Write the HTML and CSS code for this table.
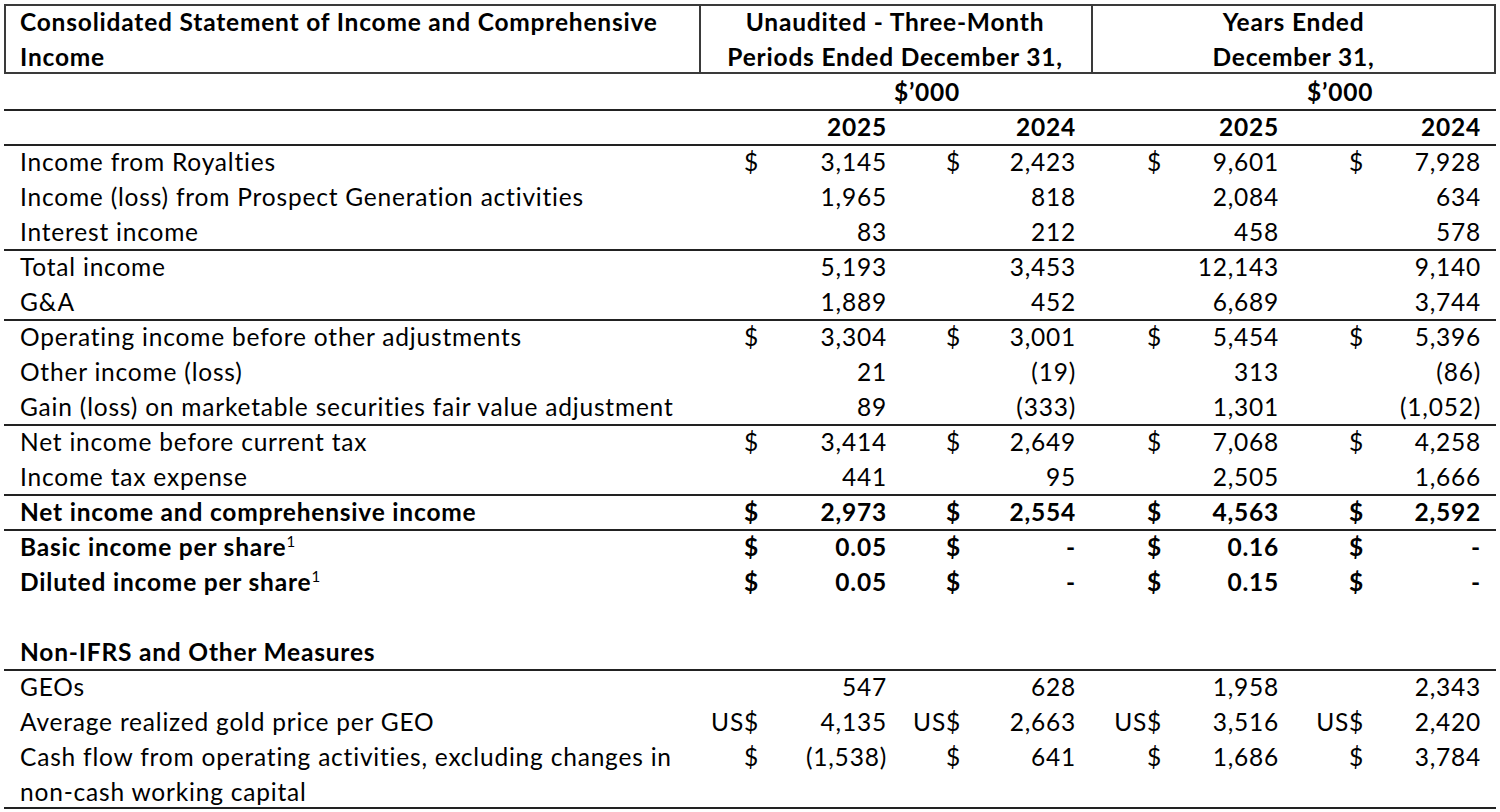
FILE: index.html
```html
<!DOCTYPE html>
<html lang="en">
<head>
<meta charset="utf-8">
<title>Consolidated Statement of Income and Comprehensive Income</title>
<link rel="stylesheet" href="styles.css">
</head>
<body>
<table class="fs">
  <colgroup>
    <col class="c-label"><col class="c-s1"><col class="c-v1"><col class="c-s2"><col class="c-v2">
    <col class="c-s3"><col class="c-v3"><col class="c-s4"><col class="c-v4">
  </colgroup>
  <thead>
    <tr class="head">
      <th class="label box-l">Consolidated Statement of Income and Comprehensive<br>Income</th>
      <th colspan="4" class="period box-m">Unaudited - Three-Month<br>Periods Ended December 31,</th>
      <th colspan="4" class="period box-r">Years Ended<br>December 31,</th>
    </tr>
    <tr class="unit">
      <th></th><th></th><th colspan="3" class="unit-a">$’000</th><th></th><th colspan="3" class="unit-b">$’000</th>
    </tr>
    <tr class="years rule">
      <th></th><th></th><th class="v1">2025</th><th></th><th class="v2">2024</th><th></th><th class="v1">2025</th><th></th><th class="v2">2024</th>
    </tr>
  </thead>
  <tbody>
    <tr class="rule">
      <td class="label">Income from Royalties</td>
      <td class="sym">$</td><td class="v1">3,145</td><td class="sym">$</td><td class="v2">2,423</td>
      <td class="sym">$</td><td class="v1">9,601</td><td class="sym">$</td><td class="v2">7,928</td>
    </tr>
    <tr>
      <td class="label">Income (loss) from Prospect Generation activities</td>
      <td class="sym"></td><td class="v1">1,965</td><td class="sym"></td><td class="v2">818</td>
      <td class="sym"></td><td class="v1">2,084</td><td class="sym"></td><td class="v2">634</td>
    </tr>
    <tr>
      <td class="label">Interest income</td>
      <td class="sym"></td><td class="v1">83</td><td class="sym"></td><td class="v2">212</td>
      <td class="sym"></td><td class="v1">458</td><td class="sym"></td><td class="v2">578</td>
    </tr>
    <tr class="rule">
      <td class="label">Total income</td>
      <td class="sym"></td><td class="v1">5,193</td><td class="sym"></td><td class="v2">3,453</td>
      <td class="sym"></td><td class="v1">12,143</td><td class="sym"></td><td class="v2">9,140</td>
    </tr>
    <tr>
      <td class="label">G&amp;A</td>
      <td class="sym"></td><td class="v1">1,889</td><td class="sym"></td><td class="v2">452</td>
      <td class="sym"></td><td class="v1">6,689</td><td class="sym"></td><td class="v2">3,744</td>
    </tr>
    <tr class="rule">
      <td class="label">Operating income before other adjustments</td>
      <td class="sym">$</td><td class="v1">3,304</td><td class="sym">$</td><td class="v2">3,001</td>
      <td class="sym">$</td><td class="v1">5,454</td><td class="sym">$</td><td class="v2">5,396</td>
    </tr>
    <tr>
      <td class="label">Other income (loss)</td>
      <td class="sym"></td><td class="v1">21</td><td class="sym"></td><td class="v2">(19)</td>
      <td class="sym"></td><td class="v1">313</td><td class="sym"></td><td class="v2">(86)</td>
    </tr>
    <tr>
      <td class="label">Gain (loss) on marketable securities fair value adjustment</td>
      <td class="sym"></td><td class="v1">89</td><td class="sym"></td><td class="v2">(333)</td>
      <td class="sym"></td><td class="v1">1,301</td><td class="sym"></td><td class="v2">(1,052)</td>
    </tr>
    <tr class="rule">
      <td class="label">Net income before current tax</td>
      <td class="sym">$</td><td class="v1">3,414</td><td class="sym">$</td><td class="v2">2,649</td>
      <td class="sym">$</td><td class="v1">7,068</td><td class="sym">$</td><td class="v2">4,258</td>
    </tr>
    <tr>
      <td class="label">Income tax expense</td>
      <td class="sym"></td><td class="v1">441</td><td class="sym"></td><td class="v2">95</td>
      <td class="sym"></td><td class="v1">2,505</td><td class="sym"></td><td class="v2">1,666</td>
    </tr>
    <tr class="rule strong">
      <td class="label">Net income and comprehensive income</td>
      <td class="sym">$</td><td class="v1">2,973</td><td class="sym">$</td><td class="v2">2,554</td>
      <td class="sym">$</td><td class="v1">4,563</td><td class="sym">$</td><td class="v2">2,592</td>
    </tr>
    <tr class="rule strong">
      <td class="label">Basic income per share<sup class="fn">1</sup></td>
      <td class="sym">$</td><td class="v1">0.05</td><td class="sym">$</td><td class="v2">-</td>
      <td class="sym">$</td><td class="v1">0.16</td><td class="sym">$</td><td class="v2">-</td>
    </tr>
    <tr class="strong">
      <td class="label">Diluted income per share<sup class="fn">1</sup></td>
      <td class="sym">$</td><td class="v1">0.05</td><td class="sym">$</td><td class="v2">-</td>
      <td class="sym">$</td><td class="v1">0.15</td><td class="sym">$</td><td class="v2">-</td>
    </tr>
    <tr class="spacer">
      <td class="label"></td><td></td><td></td><td></td><td></td><td></td><td></td><td></td><td></td>
    </tr>
    <tr class="strong">
      <td class="label">Non-IFRS and Other Measures</td>
      <td></td><td></td><td></td><td></td><td></td><td></td><td></td><td></td>
    </tr>
    <tr class="rule">
      <td class="label">GEOs</td>
      <td class="sym"></td><td class="v1">547</td><td class="sym"></td><td class="v2">628</td>
      <td class="sym"></td><td class="v1">1,958</td><td class="sym"></td><td class="v2">2,343</td>
    </tr>
    <tr>
      <td class="label">Average realized gold price per GEO</td>
      <td class="sym">US$</td><td class="v1">4,135</td><td class="sym">US$</td><td class="v2">2,663</td>
      <td class="sym">US$</td><td class="v1">3,516</td><td class="sym">US$</td><td class="v2">2,420</td>
    </tr>
    <tr class="last">
      <td class="label">Cash flow from operating activities, excluding changes in<br>non-cash working capital</td>
      <td class="sym">$</td><td class="v1">(1,538)</td><td class="sym">$</td><td class="v2">641</td>
      <td class="sym">$</td><td class="v1">1,686</td><td class="sym">$</td><td class="v2">3,784</td>
    </tr>
  </tbody>
</table>
</body>
</html>
```

FILE: styles.css
```css
html, body {
  margin: 0;
  padding: 0;
  background: #ffffff;
}

body {
  font-family: Lato, "Liberation Sans", sans-serif;
  color: #000000;
}

.fs {
  margin: 4px 0 0 4px;
  width: 1492px;
  table-layout: fixed;
  border-collapse: separate;
  border-spacing: 0;
  font-size: 24.5px;
  letter-spacing: 0.8px;
}

.c-label { width: 695px; }
.c-s1 { width: 64px; }
.c-v1 { width: 128px; }
.c-s2 { width: 74px; }
.c-v2 { width: 126px; }
.c-s3 { width: 75px; }
.c-v3 { width: 117px; }
.c-s4 { width: 85px; }
.c-v4 { width: 128px; }

.fs th,
.fs td {
  padding: 0;
  height: 35px;
  line-height: 35px;
  vertical-align: top;
  white-space: nowrap;
  text-align: right;
  font-weight: 400;
}

.fs th {
  font-weight: 700;
}

.fs .label {
  text-align: left;
  padding-left: 16px;
}

.fs .sym {
  padding-right: 4px;
}

.fs .v1 {
  padding-right: 4px;
}

.fs .v2 {
  padding-right: 15px;
}

.fs .period {
  text-align: center;
}

.fs .unit-a {
  text-align: center;
}

.fs .unit-b {
  text-align: center;
  padding-left: 18px;
}

/* header box */
.box-l {
  box-shadow: inset 2px 0 0 #3a3a3a, inset 0 2px 0 #3a3a3a, inset 0 -2px 0 #3a3a3a;
}

.box-m {
  box-shadow: inset 2px 0 0 #3a3a3a, inset 0 2px 0 #3a3a3a, inset 0 -2px 0 #3a3a3a;
}

.box-r {
  box-shadow: inset 2px 0 0 #3a3a3a, inset -2px 0 0 #3a3a3a, inset 0 2px 0 #3a3a3a, inset 0 -2px 0 #3a3a3a;
}

/* horizontal rules */
.rule > td,
.rule > th {
  box-shadow: inset 0 2px 0 #222222;
}

.last > td {
  box-shadow: inset 0 -2px 0 #222222;
}

.strong > td {
  font-weight: 700;
}

.fn {
  font-size: 15px;
  line-height: 0;
  vertical-align: 9px;
  font-weight: 400;
  letter-spacing: 0;
}
```
